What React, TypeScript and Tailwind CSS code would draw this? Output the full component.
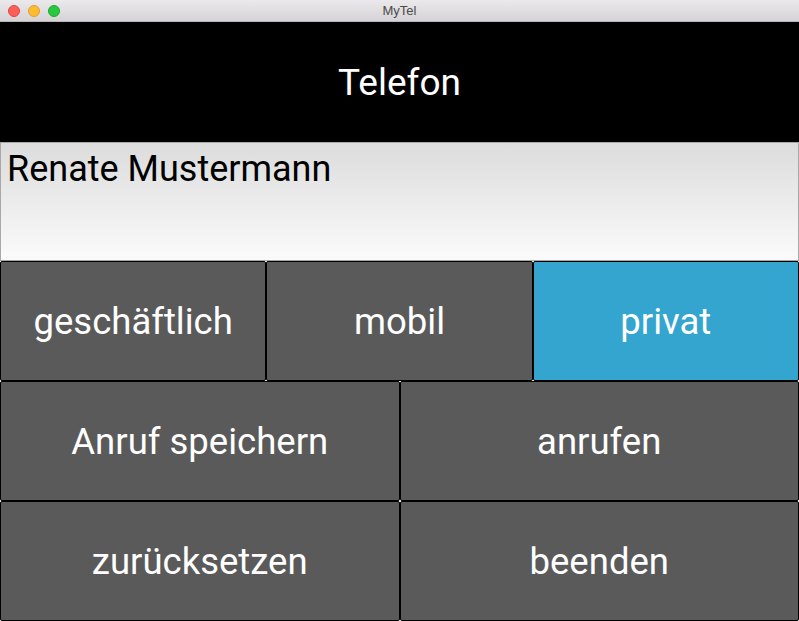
const roboto = { fontFamily: 'Roboto, "Liberation Sans", sans-serif' };

function Btn({ label, active = false }: { label: string; active?: boolean }) {
  return (
    <button
      type="button"
      className={`flex-1 h-full flex items-center justify-center pt-[3px] border border-black rounded-[2px] text-white text-[36.5px] ${active ? 'bg-[#33a5cf]' : 'bg-[#5a5a5a]'}`}
    >
      {label}
    </button>
  );
}

export default function App() {
  return (
    <div className="w-[799px] h-[621px] flex flex-col overflow-hidden bg-white" style={roboto}>
      {/* window title bar */}
      <div className="relative h-[22px] flex items-center justify-center bg-linear-to-b from-[#ebe9eb] to-[#d5d3d5] border-b border-[#b9b7b9]">
        <div className="absolute left-[8px] top-[5px] flex gap-[8px]">
          <span className="w-[12px] h-[12px] rounded-full bg-[#fc5f57] border border-[#e1463f]" />
          <span className="w-[12px] h-[12px] rounded-full bg-[#fdbc2e] border border-[#dea033]" />
          <span className="w-[12px] h-[12px] rounded-full bg-[#28c840] border border-[#1aab29]" />
        </div>
        <span className="text-[13px] text-[#4a4a4a]" style={{ fontFamily: '"Liberation Sans", sans-serif' }}>MyTel</span>
      </div>

      {/* header */}
      <div className="h-[120px] bg-black flex items-center justify-center pt-[1px]">
        <span className="text-white text-[37px]">Telefon</span>
      </div>

      {/* name field */}
      <div className="h-[119px] border border-[#a8a8a8] bg-linear-to-b from-[#dcdcdc] to-[#fbfbfb] px-[6px] pt-[4px]">
        <span className="text-black text-[36px] leading-[44px]">Renate Mustermann</span>
      </div>

      {/* buttons */}
      <div className="h-[120px] flex">
        <Btn label="geschäftlich" />
        <Btn label="mobil" />
        <Btn label="privat" active />
      </div>
      <div className="h-[120px] flex">
        <Btn label="Anruf speichern" />
        <Btn label="anrufen" />
      </div>
      <div className="h-[120px] flex">
        <Btn label="zurücksetzen" />
        <Btn label="beenden" />
      </div>
    </div>
  );
}
